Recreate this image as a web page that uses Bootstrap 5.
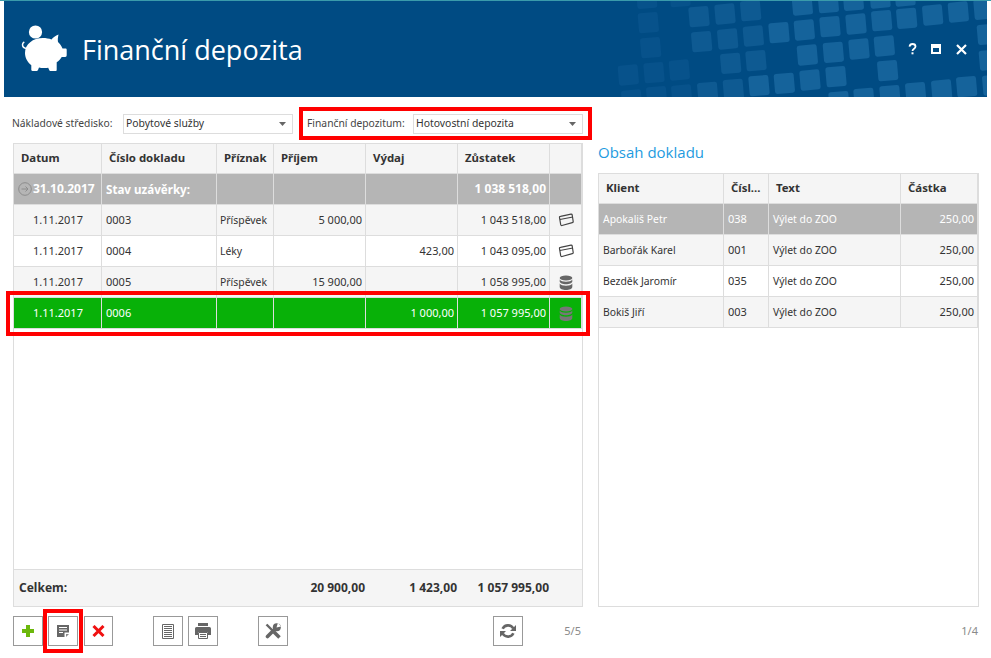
<!DOCTYPE html>
<html lang="cs">
<head>
<meta charset="utf-8">
<title>Finanční depozita</title>
<link rel="stylesheet" href="https://cdn.jsdelivr.net/npm/bootstrap@5.3.0/dist/css/bootstrap.min.css">
<style>
html,body{height:658px;overflow:hidden}
body{margin:0;background:#fff;border-top:1px solid #3a9bab;font-family:"Noto Sans","Liberation Sans",sans-serif;font-size:10.4px;color:#333}
.appbar{position:relative;height:96px;margin:0 4px;background:#004b83;overflow:hidden;color:#fff}
.appbar-art{position:absolute;left:556px;top:0;width:427px;height:96px}
.piggy{position:absolute;left:16px;top:23px;width:48px;height:48px}
.appbar-title{margin:0;padding:31px 0 0 78px;font-family:"Open Sans","Noto Sans",sans-serif;font-size:27px;font-weight:400;line-height:36px;position:relative}
.wincontrols{position:absolute;right:20px;top:42px;align-items:center}
.wincontrols svg{display:block}
.wc-max{margin-left:13px}
.wc-x{margin-left:15px}
.filterbar{height:33px;margin-top:10px;padding-left:12px}
.flt-label{white-space:nowrap;color:#444;font-size:10.3px}
.form-select.flt-select{height:20px;min-height:20px;padding:0 14px 2px 2px;border:1px solid #ddd;border-radius:0;font-size:10.4px;line-height:17px;color:#333;width:170px;
 background-size:7px 4px;background-position:right 6px center;
 background-image:url("data:image/svg+xml,%3csvg xmlns='http://www.w3.org/2000/svg' viewBox='0 0 7 4'%3e%3cpath fill='%23666' d='M0 0h7L3.5 4z'/%3e%3c/svg%3e")}
.flt-main{width:111px}
.flt-main .flt-label{display:block}
.redframe{border:4px solid #f00;height:33px;width:293px;margin-left:6px;padding-left:4px}
.redframe .flt-label{width:106px}
.columns{margin-top:3px}
.leftcol{width:570px;margin-left:13px;position:relative}
.rightcol{width:381px;margin-left:15px}
.gridbox{height:464px;border:1px solid #ddd;background:#fff}
.gridbox-right{height:434px}
.panel-title{height:30px;margin:0;color:#1e9be0;font-family:"Open Sans","Noto Sans",sans-serif;font-size:15px;font-weight:400;line-height:18px}
.datagrid{table-layout:fixed;border-collapse:separate;border-spacing:0;margin:0;font-size:10.4px}
.datagrid>:not(caption)>*>*{padding:1px 3px 0 4px;border:0;border-right:1px solid #ddd;border-bottom:1px solid #ddd;height:31px;vertical-align:middle;color:#333;white-space:nowrap;overflow:hidden;box-shadow:none;background:#fff}
.datagrid>thead>tr>th{height:30px;padding:0 3px 2px 7px;background:#f5f5f5;font-size:11.4px;font-weight:700;color:#333}
.datagrid>tbody>tr.alt>td{background:#f5f5f5}
.datagrid>tbody>tr.stav>td{background:#b5b5b5;color:#fff}
.datagrid>tbody>tr.stav-b>td{font-size:11.6px;font-weight:700}
.datagrid>tbody>tr.green>td{background:#08b108;color:#fff}
.datagrid>tbody>tr>td.dg-num{font-size:11px;padding-top:0}
.datagrid>tbody>tr.stav-b>td.dg-num{font-size:12px}
.datagrid>tbody>tr>td.c-date{padding-left:19px}
.datagrid>tbody>tr>td.c-icon{padding:0;text-align:center}
.datagrid td.c-icon svg{display:inline-block;vertical-align:middle}
.datagrid>tbody>tr>td.c-first{padding-left:3px}
.stavicon{vertical-align:-3px;margin-right:1px;margin-left:-15px}
.gridfoot{height:37px;background:#f5f5f5;border-top:1px solid #ddd;font-weight:700;font-size:12px;color:#333}
.gridfoot>span{display:block;line-height:36px}
.f-label{margin-left:5px;width:254px}
.f-num{width:92px;text-align:right}
.green-frame{position:absolute;left:-7px;top:148px;width:584px;height:45px;border:4px solid #f00;pointer-events:none}
.toolbar{margin-top:9px;height:30px;align-items:center}
.btn.tool{width:30px;height:30px;padding:0;border:1px solid #999;border-radius:0;background:#fff;display:flex;align-items:center;justify-content:center;flex:none}
.tool-hl{position:relative}
.tool-frame{position:absolute;left:-5px;top:-7px;width:40px;height:44px;border:4px solid #f00;pointer-events:none}
.t1{margin-left:5px}.t2{margin-left:6px;width:29px!important}.t3{margin-left:40px}.t4{margin-left:5px}.t5{margin-left:40px}.t6{margin-left:205px}
.pager{color:#8a8a8a;font-size:11px;margin-left:auto;margin-right:2px}
.rightcol .toolbar{justify-content:flex-end}
.rightcol .pager{margin-right:1px}
</style>
</head>
<body>
<header class="appbar">
  <svg class="appbar-art" viewBox="0 3 1281 288" aria-hidden="true">
    <defs><rect id="sq" x="-30" y="-30" width="60" height="60" rx="7" transform="rotate(-5)"/></defs>
    <g fill="#15639b">
      <use href="#sq" x="727" y="15"/><use href="#sq" x="805" y="8"/><use href="#sq" x="880" y="1"/><use href="#sq" x="960" y="-6"/><use href="#sq" x="1035" y="-12"/>
      <use href="#sq" x="657" y="98"/><use href="#sq" x="733" y="90"/><use href="#sq" x="810" y="80"/><use href="#sq" x="888" y="72"/><use href="#sq" x="965" y="62"/><use href="#sq" x="1040" y="55"/><use href="#sq" x="1118" y="45"/><use href="#sq" x="1195" y="36"/><use href="#sq" x="1272" y="28"/>
      <use href="#sq" x="1282" y="103"/><use href="#sq" x="742" y="165"/><use href="#sq" x="820" y="157"/><use href="#sq" x="897" y="147"/><use href="#sq" x="973" y="138"/><use href="#sq" x="1288" y="180"/>
      <use href="#sq" x="983" y="212"/><use href="#sq" x="597" y="257"/><use href="#sq" x="673" y="250"/><use href="#sq" x="750" y="240"/><use href="#sq" x="828" y="230"/>
      <use href="#sq" x="837" y="305"/><use href="#sq" x="912" y="295"/><use href="#sq" x="990" y="287"/><use href="#sq" x="1067" y="278"/><use href="#sq" x="1145" y="270"/><use href="#sq" x="1220" y="260"/><use href="#sq" x="1298" y="255"/>
    </g>
    <g fill="#0e5a92">
      <use href="#sq" x="417" y="50"/><use href="#sq" x="495" y="42"/><use href="#sq" x="572" y="32"/>
      <use href="#sq" x="425" y="125"/><use href="#sq" x="503" y="117"/><use href="#sq" x="580" y="108"/>
      <use href="#sq" x="512" y="190"/><use href="#sq" x="588" y="182"/>
      <use href="#sq" x="443" y="277"/><use href="#sq" x="520" y="268"/>
    </g>
    <g fill="#07528b">
      <use href="#sq" x="265" y="68"/><use href="#sq" x="272" y="143"/><use href="#sq" x="205" y="225"/><use href="#sq" x="282" y="218"/><use href="#sq" x="358" y="210"/>
      <use href="#sq" x="215" y="300"/><use href="#sq" x="290" y="290"/><use href="#sq" x="365" y="285"/><use href="#sq" x="360" y="-10"/><use href="#sq" x="260" y="-5"/>
    </g>
  </svg>
  <svg class="piggy" viewBox="20 24 48 48" fill="#fff" aria-hidden="true">
    <circle cx="35.5" cy="32" r="6.6"/>
    <path d="M25 53c0-9 8-15 18-15 3 0 6 .5 8.500 1.500 1.500-2 4-4 7-5-.5 2.500-1 5-.5 7.500 2 1.700 3.500 4 4.500 6.500h3c1 0 1.200.5 1.200 1.500v5c0 1-.5 2-1.500 2h-3.500c-1.200 2-3 4-5 5.200V70c0 .5-.4 1-1 1h-5c-.8 0-1.200-.4-1.500-1l-1-2.300c-1.500.3-3 .4-4.700.3-1.500 0-3-.2-4.500-.6l-1 2.500c-.3.700-.8 1.100-1.500 1.100h-4c-.8 0-1.200-.5-1.200-1.200v-4.500C27.500 62 25 58 25 53z"/>
    <path d="M27 48.500c-2.300-.2-4.500-1.500-4.500-3.800 0-1.300.8-2.200 1.800-2.700" fill="none" stroke="#fff" stroke-width="1.500"/>
  </svg>
  <h1 class="appbar-title">Finanční depozita</h1>
  <div class="wincontrols d-flex">
    <svg width="11" height="12" viewBox="0 0 11 12"><path d="M2.500 3.600C2.800 1.800 4 1 5.500 1c2 0 3 1 3 2.500 0 2.200-3 2.200-3 4.500" fill="none" stroke="#fff" stroke-width="1.800"/><rect x="4.500" y="9.300" width="2" height="2" fill="#fff"/></svg>
    <svg class="wc-max" width="10" height="10" viewBox="0 0 10 10"><path fill="#fff" fill-rule="evenodd" d="M0 0h10v10H0zM2 4v4h6V4z"/></svg>
    <svg class="wc-x" width="11" height="11" viewBox="0 0 11 11"><path d="M1 1l9 9M10 1l-9 9" stroke="#fff" stroke-width="2.200"/></svg>
  </div>
</header>

<div class="filterbar d-flex align-items-center">
  <div class="flt-main"><span class="flt-label">Nákladové středisko:</span></div>
  <select class="form-select flt-select"><option>Pobytové služby</option></select>
  <div class="redframe d-flex align-items-center">
    <span class="flt-label">Finanční depozitum:</span>
    <select class="form-select flt-select"><option>Hotovostní depozita</option></select>
  </div>
</div>

<div class="columns d-flex">
  <section class="leftcol">
    <div class="gridbox d-flex flex-column">
      <table class="table datagrid" style="width:568px">
        <colgroup><col style="width:88px"><col style="width:115px"><col style="width:57px"><col style="width:92px"><col style="width:92px"><col style="width:92px"><col style="width:32px"></colgroup>
        <thead><tr><th>Datum</th><th>Číslo dokladu</th><th>Příznak</th><th>Příjem</th><th>Výdaj</th><th>Zůstatek</th><th></th></tr></thead>
        <tbody>
          <tr class="stav stav-b"><td class="c-date dg-num"><svg class="stavicon" width="14" height="14" viewBox="0 0 14 14"><circle cx="7" cy="7" r="6.300" fill="none" stroke="#8c8c8c"/><path d="M3.500 7h6.500M7.500 4.500L10 7l-2.500 2.500" fill="none" stroke="#8c8c8c"/></svg>31.10.2017</td><td>Stav uzávěrky:</td><td></td><td></td><td></td><td class="text-end dg-num">1 038 518,00</td><td></td></tr>
          <tr class="alt"><td class="c-date dg-num">1.11.2017</td><td class="dg-num">0003</td><td class="c-first">Příspěvek</td><td class="text-end dg-num">5 000,00</td><td></td><td class="text-end dg-num">1 043 518,00</td><td class="c-icon"><svg width="16" height="14" viewBox="0 0 16 14"><g fill="none" stroke="#444" stroke-width="1.200"><path d="M1.500 4.500q-.2-1 1-1.200L13 1.200q1-.1 1.200 .8l1 6.500q.1 1-.9 1.200L4 12.500q-1 .2-1.300-.8z"/><path d="M1.900 6.500L14.900 4"/></g></svg></td></tr>
          <tr><td class="c-date dg-num">1.11.2017</td><td class="dg-num">0004</td><td class="c-first">Léky</td><td></td><td class="text-end dg-num">423,00</td><td class="text-end dg-num">1 043 095,00</td><td class="c-icon"><svg width="16" height="14" viewBox="0 0 16 14"><g fill="none" stroke="#444" stroke-width="1.200"><path d="M1.500 4.500q-.2-1 1-1.200L13 1.200q1-.1 1.200 .8l1 6.500q.1 1-.9 1.200L4 12.500q-1 .2-1.300-.8z"/><path d="M1.900 6.500L14.900 4"/></g></svg></td></tr>
          <tr class="alt"><td class="c-date dg-num">1.11.2017</td><td class="dg-num">0005</td><td class="c-first">Příspěvek</td><td class="text-end dg-num">15 900,00</td><td></td><td class="text-end dg-num">1 058 995,00</td><td class="c-icon"><svg width="14" height="15" viewBox="0 0 14 15"><g fill="#666"><ellipse cx="7" cy="3" rx="6.300" ry="2.600"/><path d="M.7 4.500C1.500 6 4 6.700 7 6.700s5.500-.7 6.300-2.200v2c0 1.500-3 2.700-6.300 2.700S.7 8 .7 6.500z"/><path d="M.7 8.500C1.500 10 4 10.700 7 10.700s5.500-.7 6.300-2.200v3.500c0 1.700-3 3-6.300 3s-6.300-1.300-6.300-3z"/></g></svg></td></tr>
          <tr class="green"><td class="c-date dg-num">1.11.2017</td><td class="dg-num">0006</td><td></td><td></td><td class="text-end dg-num">1 000,00</td><td class="text-end dg-num">1 057 995,00</td><td class="c-icon"><svg width="14" height="15" viewBox="0 0 14 15"><g fill="#777"><ellipse cx="7" cy="3" rx="6.300" ry="2.600"/><path d="M.7 4.500C1.500 6 4 6.700 7 6.700s5.500-.7 6.300-2.200v2c0 1.500-3 2.700-6.300 2.700S.7 8 .7 6.500z"/><path d="M.7 8.500C1.500 10 4 10.700 7 10.700s5.500-.7 6.300-2.200v3.500c0 1.700-3 3-6.300 3s-6.300-1.300-6.300-3z"/></g></svg></td></tr>
        </tbody>
      </table>
      <div class="gridfoot mt-auto d-flex">
        <span class="f-label">Celkem:</span>
        <span class="f-num">20 900,00</span>
        <span class="f-num">1 423,00</span>
        <span class="f-num">1 057 995,00</span>
      </div>
    </div>
    <div class="green-frame"></div>
    <div class="toolbar d-flex">
      <button class="btn tool" type="button" aria-label="Přidat"><svg width="12" height="12" viewBox="0 0 12 12"><path fill="#6cb80c" d="M4 0h4v4h4v4H8v4H4V8H0V4h4z"/></svg></button>
      <div class="tool-hl t1"><button class="btn tool" type="button" aria-label="Upravit"><svg width="12" height="12" viewBox="0 0 12 12"><path fill="#666" d="M0 0h12v7.500H7.500V12H0z"/><path stroke="#fff" d="M2 2.500h8M2 5h8M2 7.500h4"/><path fill="#888" d="M9 12V9h3z"/></svg></button><span class="tool-frame"></span></div>
      <button class="btn tool t2" type="button" aria-label="Smazat"><svg width="13" height="12" viewBox="0 0 13 12"><path d="M1.500 1l10 10M11.500 1l-10 10" stroke="#f01010" stroke-width="3"/></svg></button>
      <button class="btn tool t3" type="button" aria-label="Doklad"><svg width="12" height="15" viewBox="0 0 12 15"><path fill="none" stroke="#666" d="M.5.500h11v14H.5z"/><path stroke="#666" d="M2 2.500h8M2 4.500h8M2 6.500h8M2 8.500h8M2 10.500h8M2 12.500h8"/></svg></button>
      <button class="btn tool t4" type="button" aria-label="Tisk"><svg width="16" height="16" viewBox="0 0 16 16"><path fill="#666" d="M3 0h10v3H3zM1.500 4h13Q16 4 16 5.500V12h-3V9H3v3H0V5.500Q0 4 1.500 4z"/><path fill="none" stroke="#666" d="M3.500 9.500h9v6h-9z"/><path stroke="#666" d="M5 11.500h6M5 13.500h6"/></svg></button>
      <button class="btn tool t5" type="button" aria-label="Nástroje"><svg width="16" height="16" viewBox="0 0 16 16"><path d="M1.500 1.500L9 9" stroke="#666" stroke-width="2.400" fill="none"/><path d="M9 9l5.500 5.500" stroke="#666" stroke-width="3.600" fill="none"/><path d="M2.500 13.500L10 6" stroke="#666" stroke-width="3.600" stroke-linecap="round" fill="none"/><circle cx="11.800" cy="4.200" r="4" fill="#666"/><path d="M11.500 4.500L16 3.500 13 -.5z" fill="#fff"/></svg></button>
      <button class="btn tool t6" type="button" aria-label="Obnovit"><svg width="16" height="16" viewBox="0 0 16 16"><g fill="none" stroke="#666" stroke-width="2.600"><path d="M13.300 5.500A6 6 0 0 0 2.600 5.800"/><path d="M2.700 10.500A6 6 0 0 0 13.400 10.200"/></g><path fill="#666" d="M16 2v6h-6zM0 14V8h6z"/></svg></button>
      <span class="pager">5/5</span>
    </div>
  </section>

  <section class="rightcol">
    <h2 class="panel-title">Obsah dokladu</h2>
    <div class="gridbox gridbox-right">
      <table class="table datagrid" style="width:379px">
        <colgroup><col style="width:125px"><col style="width:45px"><col style="width:132px"><col style="width:77px"></colgroup>
        <thead><tr><th>Klient</th><th>Čísl...</th><th>Text</th><th>Částka</th></tr></thead>
        <tbody>
          <tr class="stav"><td>Apokališ Petr</td><td class="dg-num">038</td><td>Výlet do ZOO</td><td class="text-end dg-num">250,00</td></tr>
          <tr class="alt"><td>Barbořák Karel</td><td class="dg-num">001</td><td>Výlet do ZOO</td><td class="text-end dg-num">250,00</td></tr>
          <tr><td>Bezděk Jaromír</td><td class="dg-num">035</td><td>Výlet do ZOO</td><td class="text-end dg-num">250,00</td></tr>
          <tr class="alt"><td>Bokiš Jiří</td><td class="dg-num">003</td><td>Výlet do ZOO</td><td class="text-end dg-num">250,00</td></tr>
        </tbody>
      </table>
    </div>
    <div class="toolbar d-flex"><span class="pager">1/4</span></div>
  </section>
</div>
<script src="https://cdn.jsdelivr.net/npm/bootstrap@5.3.0/dist/js/bootstrap.bundle.min.js"></script>
</body>
</html>
